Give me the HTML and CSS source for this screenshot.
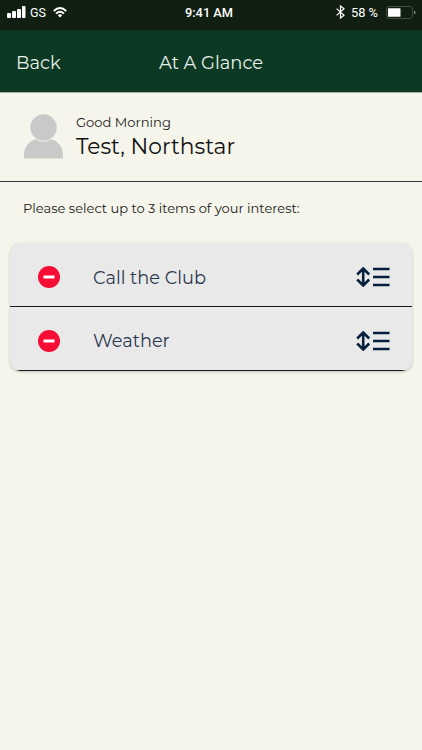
FILE: index.html
```
<!DOCTYPE html>
<html lang="en">
<head>
<meta charset="utf-8">
<title>At A Glance</title>
<link rel="stylesheet" href="styles.css">
</head>
<body>
<div class="status">
  <div class="signal">
    <svg width="19" height="12" viewBox="0 0 19 12" fill="#fff"><rect y="7" width="4" height="5" rx="1"/><rect x="5" y="5" width="4" height="7" rx="1"/><rect x="10" y="3" width="4" height="9" rx="1"/><rect x="15" y="0" width="3.5" height="12" rx="1"/></svg>
    <span class="carrier">GS</span>
    <svg class="wifi" width="14" height="11" viewBox="0 0 14 11" fill="none" stroke="#fff" stroke-width="1.8"><path d="M.7 4Q7-2 13.3 4M3 6.6Q7 2.8 11 6.6"/><path d="M4.8 8.2Q7 6.2 9.2 8.2L7 10.5Z" fill="#fff" stroke="none"/></svg>
  </div>
  <span class="time">9:41 AM</span>
  <div class="power">
    <svg width="9" height="14" viewBox="0 0 9 14" fill="none" stroke="#fff" stroke-width="1.2"><path d="M.6 3.6 8 10.2 4.5 13V1L8 3.8.6 10.4"/></svg>
    <span class="percent">58 %</span>
    <svg class="battery" width="30" height="13" viewBox="0 0 30 13"><rect x=".5" y=".5" width="26" height="12" rx="2.5" fill="none" stroke="#414b40"/><rect x="2" y="2.2" width="12.5" height="8.6" rx=".6" fill="#fff"/><path d="M28 4.8q1.5.3 1.5 1.7T28 8.2Z" fill="#8b918a"/></svg>
  </div>
</div>
<header class="nav">
  <span class="back">Back</span>
  <span class="title">At A Glance</span>
</header>
<section class="profile">
  <svg width="39" height="45" viewBox="0 0 39 45" fill="#c9c9c9"><path d="M0 44.5V41C0 33 5 27 12 25.2Q19.5 30.5 27 25.2C34 27 39 33 39 41V44.5Z"/><circle cx="19.5" cy="13.5" r="13.2"/></svg>
  <div class="greeting">
    <div class="hello">Good Morning</div>
    <div class="name">Test, Northstar</div>
  </div>
</section>
<p class="prompt">Please select up to 3 items of your interest:</p>
<div class="list">
  <div class="row">
    <svg class="remove" width="22" height="22" viewBox="0 0 22 22"><circle cx="11" cy="11" r="11" fill="#f60d35"/><path d="M5.5 11h11" stroke="#fff" stroke-width="3"/></svg>
    <span class="label">Call the Club</span>
    <svg class="sort" width="34" height="20" viewBox="0 0 34 20" fill="none" stroke="#07203f" stroke-width="2.6"><path d="M7.2 2.5v15M1.2 7.5l6-6 6 6M1.2 12.5l6 6 6-6M17 2h16.5M17 10h16.5M17 18h16.5"/></svg>
  </div>
  <div class="row">
    <svg class="remove" width="22" height="22" viewBox="0 0 22 22"><circle cx="11" cy="11" r="11" fill="#f60d35"/><path d="M5.5 11h11" stroke="#fff" stroke-width="3"/></svg>
    <span class="label">Weather</span>
    <svg class="sort" width="34" height="20" viewBox="0 0 34 20" fill="none" stroke="#07203f" stroke-width="2.6"><path d="M7.2 2.5v15M1.2 7.5l6-6 6 6M1.2 12.5l6 6 6-6M17 2h16.5M17 10h16.5M17 18h16.5"/></svg>
  </div>
</div>
</body>
</html>
```
FILE: styles.css
```
* { box-sizing: border-box; }
body {
  margin: 0;
  height: 750px;
  background: #f5f5eb;
  font-family: Montserrat, Inter, sans-serif;
  font-weight: 400;
  color: #111;
  overflow: hidden;
}
svg { display: block; flex: none; }
span { white-space: nowrap; }
.status {
  height: 30px;
  padding: 0 7px 6px;
  background: #111e12;
  color: #fff;
  font-family: Roboto, sans-serif;
  font-size: 13px;
  display: grid;
  grid-template-columns: 1fr auto 1fr;
  align-items: center;
}
.signal, .power { display: flex; align-items: center; }
.carrier { margin-left: 4px; font-size: 12.5px; }
.wifi { margin-left: 7px; }
.time { font-weight: 500; font-size: 12.8px; margin-right: 4px; }
.power { justify-content: flex-end; }
.percent { margin-left: 6px; font-size: 12.8px; }
.battery { margin: 0 -1px 0 8px; }
.nav {
  height: 63px;
  background: #0b3924;
  border-bottom: 1px solid #9fb0a0;
  color: #e8f0e8;
  display: grid;
  grid-template-columns: 1fr auto 1fr;
  align-items: center;
  padding: 2px 16px 0;
  font-size: 17.9px;
}
.profile {
  height: 89px;
  border-bottom: 1px solid #2e3c4a;
  padding: 21px 24px 0;
  display: flex;
  align-items: flex-start;
  gap: 13px;
}
.greeting { white-space: nowrap; margin-top: -2px; }
.hello { font-size: 13.1px; line-height: 20px; color: #222; }
.name { font-size: 21.8px; line-height: 28px; }
.prompt {
  margin: 0;
  height: 61px;
  padding: 16px 23px 0;
  font-size: 13.03px;
  line-height: 20px;
  color: #222;
}
.list {
  margin: 0 10px;
  border-radius: 10px;
  overflow: hidden;
  background: #e9e9e9;
  box-shadow: 0 1px 3px rgba(0, 0, 0, .22);
}
.row {
  height: 64px;
  padding: 4px 22px 0 28px;
  border-bottom: 1px solid #17191b;
  display: flex;
  align-items: center;
}
.row:first-child { padding-top: 5px; }
.label {
  flex: 1;
  margin-left: 33px;
  color: #2c394f;
  font-size: 17.75px;
}
```
